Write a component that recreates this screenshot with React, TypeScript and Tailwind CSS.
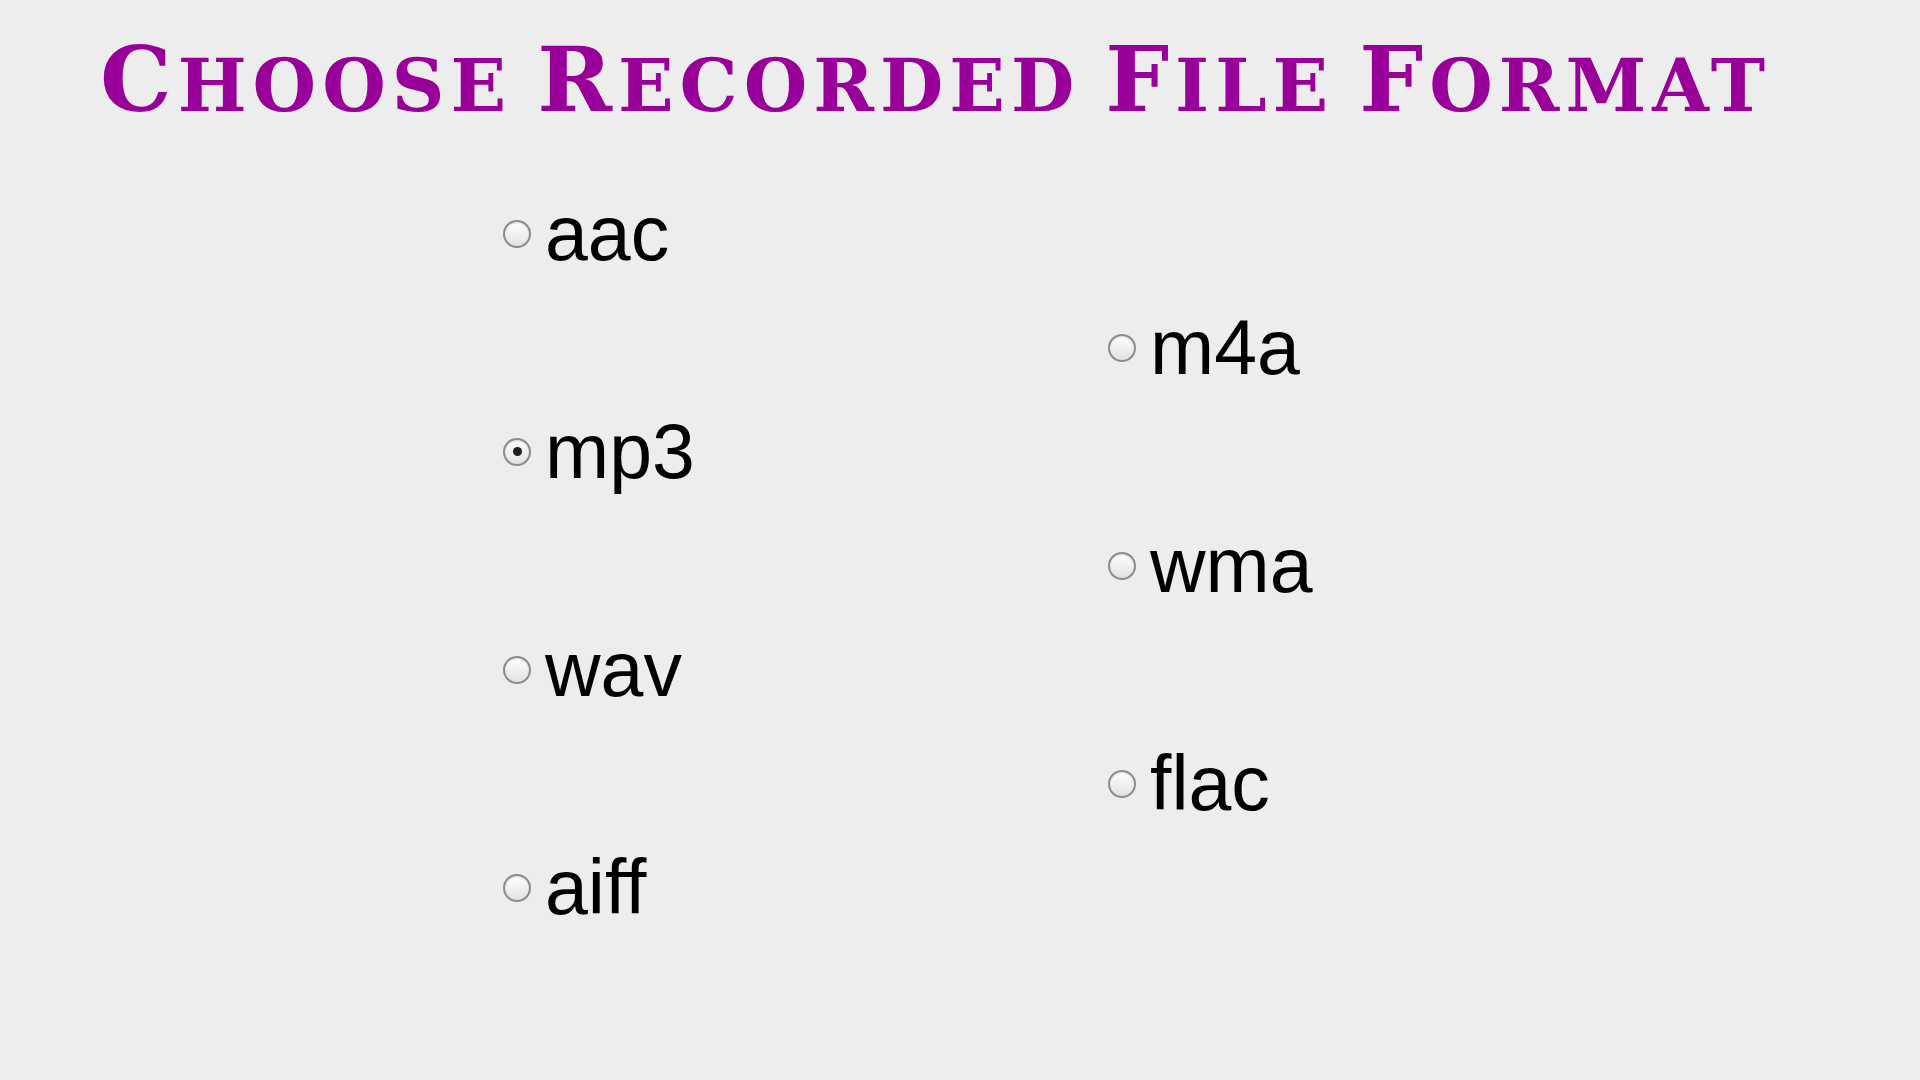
const leftFormats = ["aac", "mp3", "wav", "aiff"];
const rightFormats = ["m4a", "wma", "flac"];

const TitleWord = ({ word }: { word: string }) => (
	<span className="mr-[25px] last:mr-0">
		<span className="text-[90px]">{word[0]}</span>
		<span className="text-[73px]">{word.slice(1).toUpperCase()}</span>
	</span>
);

const Radio = ({ label, checked }: { label: string; checked?: boolean }) => (
	<label className="flex h-[77px] items-center gap-[14px]">
		<span className="flex h-[28px] w-[28px] items-center justify-center rounded-full border-2 border-[#8c8c8c] bg-gradient-to-b from-white to-[#e2e2e2] shadow-[inset_0_1px_2px_rgba(0,0,0,0.15)]">
			{checked && <span className="h-[9px] w-[9px] rounded-full bg-[#1e1e1e]" />}
		</span>
		<span className="text-[77px] leading-none text-black">{label}</span>
	</label>
);

export default function App() {
	return (
		<div className="min-h-screen w-full bg-[#ededed] font-['Liberation_Sans',Arial,sans-serif]">
			<h1 className="pl-[100px] pt-[34px] text-[90px] font-bold leading-none tracking-[6px] text-[#990099] font-['DejaVu_Serif',serif] whitespace-nowrap">
				{"Choose Recorded File Format".split(" ").map((w) => (
					<TitleWord key={w} word={w} />
				))}
			</h1>
			<div className="ml-[503px] mt-[71px] grid w-[1210px] grid-cols-2">
				<div className="flex flex-col gap-[141px]">
					{leftFormats.map((f) => (
						<Radio key={f} label={f} checked={f === "mp3"} />
					))}
				</div>
				<div className="flex flex-col gap-[141px] pt-[114px]">
					{rightFormats.map((f) => (
						<Radio key={f} label={f} />
					))}
				</div>
			</div>
		</div>
	);
}
